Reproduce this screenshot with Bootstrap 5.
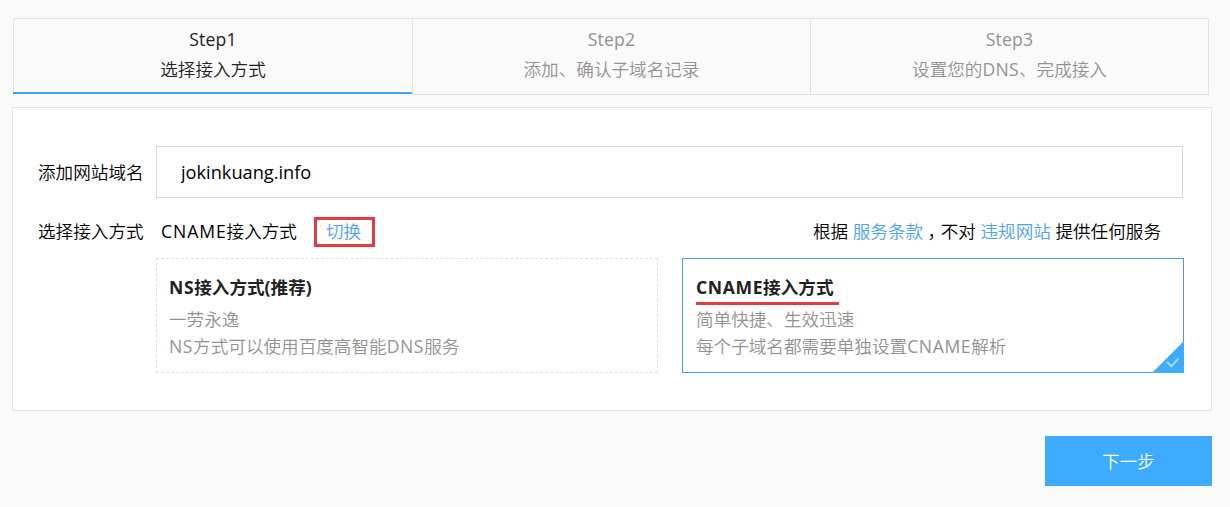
<!DOCTYPE html>
<html lang="zh-CN">
<head>
<meta charset="utf-8">
<meta name="viewport" content="width=device-width, initial-scale=1">
<title>选择接入方式</title>
<link href="https://cdn.jsdelivr.net/npm/bootstrap@5.3.0/dist/css/bootstrap.min.css" rel="stylesheet">
<style>
  body { background: #fafafa; color: #000; font: 350 17.6px/30px "Open Sans", "Noto Sans CJK SC", sans-serif; overflow: hidden; }
  .page { padding: 18px 18px 0 12px; }
  .steps { height: 77px; margin: 0 3px 12px 1px; border: 1px solid #e2e2e2; border-bottom: 0; }
  .step { color: #929292; padding-top: 5px; border-bottom: 1px solid #e2e2e2; flex: 1 1 0; }
  .step + .step { border-left: 1px solid #e2e2e2; }
  .step.active { color: #222; border-bottom: 2px solid #42a5f0; margin: 0 0 1px -1px; flex: 0 0 399px; padding-left: 1px; }
  .latin { font-weight: 400; letter-spacing: .2px; }
  .panel { height: 304px; background: #fff; border: 1px solid #e2e2e2; padding: 38px 28px 0 25px; }
  .field-label { width: 118px; }
  .domain-input { height: 52px; border: 1px solid #d8d8d8; border-radius: 0; padding: 0 24px; color: #000; font-size: 18.2px; font-weight: 400; }
  .mode-row { height: 30px; margin-top: 19px; }
  .mode-row > span { margin-top: -2px; }
  .mode-name { width: 136px; margin-left: 5px; }
  .panel a { color: #4ea3f0; text-decoration: none; }
  .switch-link { border: 3px solid #e23c40; width: 61px; height: 30px; line-height: 22px; margin-left: 17px; padding-right: 2px; }
  .terms { margin-right: 22px; }
  .comma { font-family: "Noto Sans CJK SC", sans-serif; font-feature-settings: "halt"; margin: 0 4.4px; }
  .options { margin: 11px 0 0 118px; gap: 24px; width: 1028px; }
  .option { height: 115px; border: 1px dashed #e0e0e0; padding: 15px 12px; color: #929292; line-height: 27px; }
  .option.selected { border: 1px solid #42a0e8; padding-left: 13px; }
  .option h2 { color: #222; font-size: 17.6px; font-weight: 700; line-height: 27px; margin: 0 0 5px; }
  .wide { font-weight: 400; letter-spacing: .6px; }
  .mode-name .wide { letter-spacing: .9px; }
  .steps .wide { letter-spacing: .3px; }
  h2 .wide { font-weight: 700; }
  .option .marked::after { content: ""; position: absolute; left: 0; right: -6px; bottom: -6px; height: 3px; background: #e23c40; }
  .tick { right: -1px; bottom: -1px; }
  .next-btn { width: 167px; height: 50px; margin-top: 25px; background: #3dabff; color: #fff; border-radius: 0; border: 0; font-size: 17.6px; font-weight: 350; padding: 0; }
</style>
</head>
<body>
<main class="page">
  <div class="steps d-flex text-center">
    <div class="step active"><div class="latin">Step1</div><div>选择接入方式</div></div>
    <div class="step"><div class="latin">Step2</div><div>添加、确认子域名记录</div></div>
    <div class="step"><div class="latin">Step3</div><div>设置您的<span class="wide">DNS</span>、完成接入</div></div>
  </div>
  <section class="panel">
    <div class="d-flex align-items-center">
      <label class="field-label flex-shrink-0" for="domain">添加网站域名</label>
      <input id="domain" class="form-control domain-input" type="text" value="jokinkuang.info">
    </div>
    <div class="mode-row d-flex align-items-center">
      <span class="field-label">选择接入方式</span>
      <span class="mode-name text-nowrap"><span class="wide">CNAME</span>接入方式</span>
      <a href="#" class="switch-link text-center">切换</a>
      <span class="terms ms-auto">根据 <a href="#">服务条款</a><span class="comma">，</span>不对 <a href="#">违规网站</a> 提供任何服务</span>
    </div>
    <div class="options d-flex">
      <div class="option w-50">
        <h2><span class="wide">NS</span>接入方式(推荐)</h2>
        <div>一劳永逸</div>
        <div><span class="wide">NS</span>方式可以使用百度高智能<span class="wide">DNS</span>服务</div>
      </div>
      <div class="option selected w-50 position-relative">
        <h2><span class="marked position-relative"><span class="wide">CNAME</span>接入方式</span></h2>
        <div>简单快捷、生效迅速</div>
        <div>每个子域名都需要单独设置<span class="wide">CNAME</span>解析</div>
        <svg class="tick position-absolute" width="32" height="32" viewBox="0 0 32 32"><path d="M32 0v32H0z" fill="#3dabff"/><path d="M15 21l4.5 4.2 7-7.7" fill="none" stroke="#b4deff" stroke-width="1.8"/></svg>
      </div>
    </div>
  </section>
  <div class="d-flex justify-content-end"><button class="btn next-btn" type="button">下一步</button></div>
</main>
<script src="https://cdn.jsdelivr.net/npm/bootstrap@5.3.0/dist/js/bootstrap.bundle.min.js"></script>
</body>
</html>
